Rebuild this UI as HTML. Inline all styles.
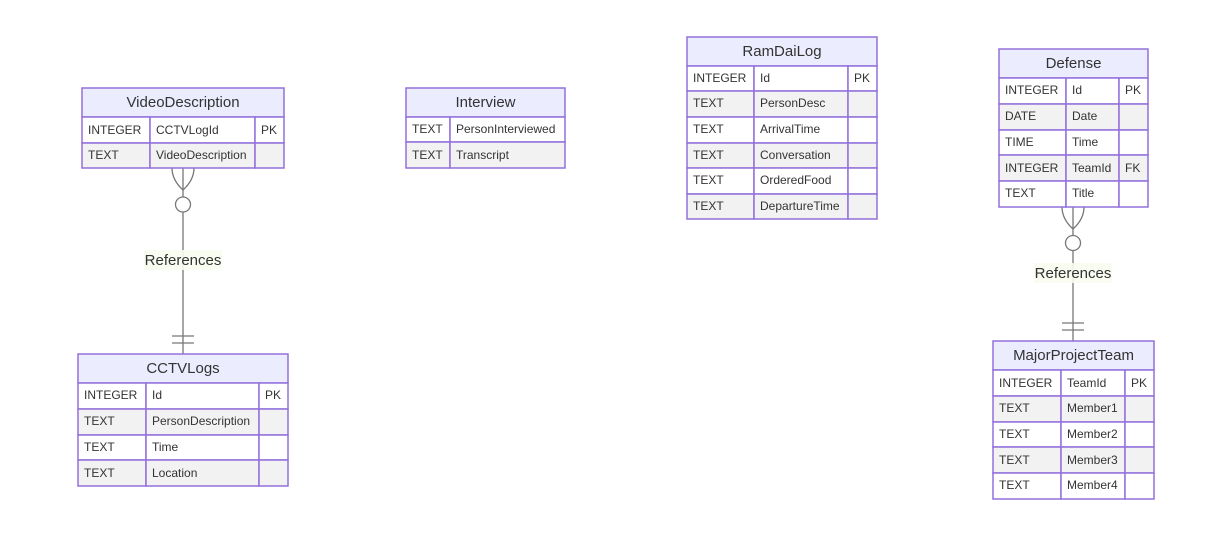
<!DOCTYPE html>
<html><head><meta charset="utf-8"><style>
html,body{margin:0;padding:0;background:#fff;}
svg{display:block;}
text{font-family:"Liberation Sans",Arial,sans-serif;fill:#333;}
.h{font-size:15px;text-anchor:middle;}
.c{font-size:12px;}
.hd{fill:#ECECFF;stroke:#9370DB;stroke-width:1.5;}
.w{fill:#fff;stroke:#9370DB;stroke-width:1.5;}
.g{fill:#f2f2f2;stroke:#9370DB;stroke-width:1.5;}
.l{stroke:#777;stroke-width:1.3;fill:none;}
</style></head><body>
<svg width="1214" height="558" viewBox="0 0 1214 558">
<!-- relations -->
<g class="l">
<line x1="183" y1="168" x2="183" y2="354"/>
<path d="M172,168 Q172,180 183,190 Q194,180 194,168"/>
<circle cx="183" cy="204.5" r="7.5" fill="#fff"/>
<line x1="172" y1="336" x2="194" y2="336"/><line x1="172" y1="343" x2="194" y2="343"/>
<line x1="1073" y1="207" x2="1073" y2="341"/>
<path d="M1062,207 Q1062,219 1073,229 Q1084,219 1084,207"/>
<circle cx="1073" cy="243" r="7.5" fill="#fff"/>
<line x1="1062" y1="323" x2="1084" y2="323"/><line x1="1062" y1="330" x2="1084" y2="330"/>
</g>
<rect x="144" y="250" width="78" height="20" fill="#f8fcee" opacity="0.9"/>
<text x="183" y="265" class="h">References</text>
<rect x="1034" y="263" width="78" height="20" fill="#f8fcee" opacity="0.9"/>
<text x="1073" y="278" class="h">References</text>

<!-- VideoDescription -->
<rect class="hd" x="82" y="88" width="202" height="29"/>
<text class="h" x="183" y="107">VideoDescription</text>
<rect class="w" x="82" y="117" width="68" height="26"/><rect class="w" x="150" y="117" width="105" height="26"/><rect class="w" x="255" y="117" width="29" height="26"/>
<text class="c" x="88" y="134">INTEGER</text><text class="c" x="156" y="134">CCTVLogId</text><text class="c" x="261" y="134">PK</text>
<rect class="g" x="82" y="143" width="68" height="25"/><rect class="g" x="150" y="143" width="105" height="25"/><rect class="g" x="255" y="143" width="29" height="25"/>
<text class="c" x="88" y="159">TEXT</text><text class="c" x="156" y="159">VideoDescription</text>

<!-- Interview -->
<rect class="hd" x="406" y="88" width="159" height="29"/>
<text class="h" x="485.5" y="107">Interview</text>
<rect class="w" x="406" y="117" width="44" height="25"/><rect class="w" x="450" y="117" width="115" height="25"/>
<text class="c" x="412" y="133">TEXT</text><text class="c" x="456" y="133">PersonInterviewed</text>
<rect class="g" x="406" y="142" width="44" height="26"/><rect class="g" x="450" y="142" width="115" height="26"/>
<text class="c" x="412" y="159">TEXT</text><text class="c" x="456" y="159">Transcript</text>

<!-- RamDaiLog -->
<rect class="hd" x="687" y="37" width="190" height="29"/>
<text class="h" x="782" y="56">RamDaiLog</text>
<rect class="w" x="687" y="66" width="67" height="25"/><rect class="w" x="754" y="66" width="94" height="25"/><rect class="w" x="848" y="66" width="29" height="25"/>
<text class="c" x="693" y="82">INTEGER</text><text class="c" x="760" y="82">Id</text><text class="c" x="854" y="82">PK</text>
<rect class="g" x="687" y="91" width="67" height="26"/><rect class="g" x="754" y="91" width="94" height="26"/><rect class="g" x="848" y="91" width="29" height="26"/>
<text class="c" x="693" y="107">TEXT</text><text class="c" x="760" y="107">PersonDesc</text>
<rect class="w" x="687" y="117" width="67" height="26"/><rect class="w" x="754" y="117" width="94" height="26"/><rect class="w" x="848" y="117" width="29" height="26"/>
<text class="c" x="693" y="133">TEXT</text><text class="c" x="760" y="133">ArrivalTime</text>
<rect class="g" x="687" y="143" width="67" height="25"/><rect class="g" x="754" y="143" width="94" height="25"/><rect class="g" x="848" y="143" width="29" height="25"/>
<text class="c" x="693" y="159">TEXT</text><text class="c" x="760" y="159">Conversation</text>
<rect class="w" x="687" y="168" width="67" height="26"/><rect class="w" x="754" y="168" width="94" height="26"/><rect class="w" x="848" y="168" width="29" height="26"/>
<text class="c" x="693" y="184">TEXT</text><text class="c" x="760" y="184">OrderedFood</text>
<rect class="g" x="687" y="194" width="67" height="25"/><rect class="g" x="754" y="194" width="94" height="25"/><rect class="g" x="848" y="194" width="29" height="25"/>
<text class="c" x="693" y="210">TEXT</text><text class="c" x="760" y="210">DepartureTime</text>

<!-- Defense -->
<rect class="hd" x="999" y="49" width="149" height="29"/>
<text class="h" x="1073.5" y="68">Defense</text>
<rect class="w" x="999" y="78" width="67" height="26"/><rect class="w" x="1066" y="78" width="53" height="26"/><rect class="w" x="1119" y="78" width="29" height="26"/>
<text class="c" x="1005" y="94">INTEGER</text><text class="c" x="1072" y="94">Id</text><text class="c" x="1125" y="94">PK</text>
<rect class="g" x="999" y="104" width="67" height="26"/><rect class="g" x="1066" y="104" width="53" height="26"/><rect class="g" x="1119" y="104" width="29" height="26"/>
<text class="c" x="1005" y="120">DATE</text><text class="c" x="1072" y="120">Date</text>
<rect class="w" x="999" y="130" width="67" height="25"/><rect class="w" x="1066" y="130" width="53" height="25"/><rect class="w" x="1119" y="130" width="29" height="25"/>
<text class="c" x="1005" y="146">TIME</text><text class="c" x="1072" y="146">Time</text>
<rect class="g" x="999" y="155" width="67" height="26"/><rect class="g" x="1066" y="155" width="53" height="26"/><rect class="g" x="1119" y="155" width="29" height="26"/>
<text class="c" x="1005" y="172">INTEGER</text><text class="c" x="1072" y="172">TeamId</text><text class="c" x="1125" y="172">FK</text>
<rect class="w" x="999" y="181" width="67" height="26"/><rect class="w" x="1066" y="181" width="53" height="26"/><rect class="w" x="1119" y="181" width="29" height="26"/>
<text class="c" x="1005" y="197">TEXT</text><text class="c" x="1072" y="197">Title</text>

<!-- CCTVLogs -->
<rect class="hd" x="78" y="354" width="210" height="29"/>
<text class="h" x="183" y="373">CCTVLogs</text>
<rect class="w" x="78" y="383" width="68" height="26"/><rect class="w" x="146" y="383" width="113" height="26"/><rect class="w" x="259" y="383" width="29" height="26"/>
<text class="c" x="84" y="399">INTEGER</text><text class="c" x="152" y="399">Id</text><text class="c" x="265" y="399">PK</text>
<rect class="g" x="78" y="409" width="68" height="26"/><rect class="g" x="146" y="409" width="113" height="26"/><rect class="g" x="259" y="409" width="29" height="26"/>
<text class="c" x="84" y="425">TEXT</text><text class="c" x="152" y="425">PersonDescription</text>
<rect class="w" x="78" y="435" width="68" height="25"/><rect class="w" x="146" y="435" width="113" height="25"/><rect class="w" x="259" y="435" width="29" height="25"/>
<text class="c" x="84" y="451">TEXT</text><text class="c" x="152" y="451">Time</text>
<rect class="g" x="78" y="460" width="68" height="26"/><rect class="g" x="146" y="460" width="113" height="26"/><rect class="g" x="259" y="460" width="29" height="26"/>
<text class="c" x="84" y="477">TEXT</text><text class="c" x="152" y="477">Location</text>

<!-- MajorProjectTeam -->
<rect class="hd" x="993" y="341" width="161" height="29"/>
<text class="h" x="1073.5" y="360">MajorProjectTeam</text>
<rect class="w" x="993" y="370" width="68" height="26"/><rect class="w" x="1061" y="370" width="64" height="26"/><rect class="w" x="1125" y="370" width="29" height="26"/>
<text class="c" x="999" y="387">INTEGER</text><text class="c" x="1067" y="387">TeamId</text><text class="c" x="1131" y="387">PK</text>
<rect class="g" x="993" y="396" width="68" height="26"/><rect class="g" x="1061" y="396" width="64" height="26"/><rect class="g" x="1125" y="396" width="29" height="26"/>
<text class="c" x="999" y="412">TEXT</text><text class="c" x="1067" y="412">Member1</text>
<rect class="w" x="993" y="422" width="68" height="25"/><rect class="w" x="1061" y="422" width="64" height="25"/><rect class="w" x="1125" y="422" width="29" height="25"/>
<text class="c" x="999" y="438">TEXT</text><text class="c" x="1067" y="438">Member2</text>
<rect class="g" x="993" y="447" width="68" height="26"/><rect class="g" x="1061" y="447" width="64" height="26"/><rect class="g" x="1125" y="447" width="29" height="26"/>
<text class="c" x="999" y="464">TEXT</text><text class="c" x="1067" y="464">Member3</text>
<rect class="w" x="993" y="473" width="68" height="26"/><rect class="w" x="1061" y="473" width="64" height="26"/><rect class="w" x="1125" y="473" width="29" height="26"/>
<text class="c" x="999" y="489">TEXT</text><text class="c" x="1067" y="489">Member4</text>
</svg>
</body></html>
